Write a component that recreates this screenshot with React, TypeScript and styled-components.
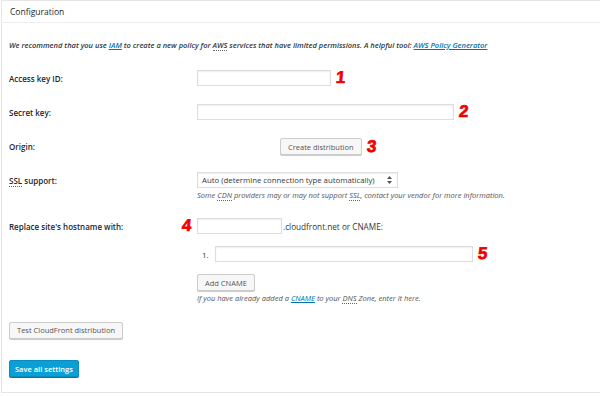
import React from 'react';
import styled, { createGlobalStyle } from 'styled-components';

const GlobalStyle = createGlobalStyle`
  html, body {
    margin: 0;
    padding: 0;
    background: #fff;
    overflow: hidden;
  }
  body {
    font-family: "Open Sans", "Liberation Sans", sans-serif;
    color: #23282d;
  }
`;

const Postbox = styled.div`
  width: 620px;
  height: 393px;
  margin-left: 1px;
  border: 1px solid #e5e5e5;
  background: #fff;
  box-sizing: border-box;
`;

const Header = styled.h2`
  margin: 0;
  height: 21px;
  padding-left: 8px;
  display: flex;
  align-items: center;
  font-size: 8.5px;
  font-weight: 400;
  color: #23282d;
  border-bottom: 1px solid #eee;
`;

const Inside = styled.div`
  padding: 0 7px;
`;

const Intro = styled.p`
  margin: 16px 0 0;
  font-size: 7.5px;
  font-style: italic;
  font-weight: 600;
  line-height: 12px;
  color: #32373c;
`;

const TextLink = styled.a`
  color: #0073aa;
  text-decoration: underline;
`;

const Abbr = styled.abbr`
  text-decoration: none;
  border-bottom: 1px dotted #666;
`;

const Row = styled.div<{ $top?: number }>`
  display: grid;
  grid-template-columns: 188px 1fr;
  align-items: start;
  padding-top: ${p => p.$top ?? 9}px;
`;

const Label = styled.div`
  display: flex;
  align-items: center;
  justify-content: space-between;
  height: 16px;
  font-size: 8px;
  font-weight: 600;
  color: #23282d;
`;

const Field = styled.div`
  display: flex;
  flex-direction: column;
  align-items: flex-start;
`;

const Line = styled.div<{ $indent?: number; $gap?: number }>`
  display: flex;
  align-items: center;
  margin-left: ${p => p.$indent ?? 0}px;
  margin-top: ${p => p.$gap ?? 0}px;
`;

const TextInput = styled.input<{ $w: number }>`
  width: ${p => p.$w}px;
  height: 16px;
  box-sizing: border-box;
  border: 1px solid #ddd;
  box-shadow: inset 0 1px 2px rgba(0, 0, 0, 0.07);
  background: #fff;
  padding: 0 4px;
  margin: 0;
  font-size: 8px;
  outline: none;
`;

const Marker = styled.span`
  font-family: "Liberation Sans", Arial, sans-serif;
  font-weight: 900;
  font-size: 17px;
  line-height: 16px;
  color: #f00000;
  margin-left: 5px;
  transform: skewX(-5deg);
  -webkit-text-stroke: 0.7px #f00000;
`;

const LeadMarker = styled(Marker)`
  margin: 0 6px 0 0;
`;

const Button = styled.button<{ $primary?: boolean }>`
  height: 17px;
  box-sizing: border-box;
  padding: 0 ${p => (p.$primary ? 5 : 7)}px;
  margin: 0;
  font-family: "Open Sans", "Liberation Sans", sans-serif;
  font-size: 7.5px;
  font-weight: ${p => (p.$primary ? 600 : 400)};
  border-radius: 2px;
  cursor: pointer;
  color: ${p => (p.$primary ? '#fff' : '#555')};
  background: ${p => (p.$primary ? '#0aa0d5' : '#f7f7f7')};
  border: 1px solid ${p => (p.$primary ? '#0a8cbf' : '#ccc')};
  box-shadow: 0 1px 0 ${p => (p.$primary ? '#0079a8' : '#ccc')};
`;

const SelectBox = styled.div`
  width: 201px;
  height: 16px;
  box-sizing: border-box;
  border: 1px solid #ddd;
  box-shadow: inset 0 1px 2px rgba(0, 0, 0, 0.07);
  display: flex;
  align-items: center;
  justify-content: space-between;
  padding: 0 5px 0 4px;
  font-size: 7.8px;
  color: #32373c;
`;

const Help = styled.p`
  margin: 2px 0 0;
  font-size: 7.5px;
  font-style: italic;
  line-height: 11px;
  color: #555;
`;

const Suffix = styled.span`
  font-size: 8.2px;
  color: #32373c;
  margin-left: 1px;
`;

const ListNum = styled.span`
  width: 18px;
  padding-left: 5px;
  box-sizing: border-box;
  font-size: 8px;
  color: #32373c;
`;

const Actions = styled.div<{ $top: number }>`
  padding-top: ${p => p.$top}px;
`;

const UpDown = () => (
  <svg width="5" height="8" viewBox="0 0 5 8">
    <path d="M2.5 0 L5 3 H0 Z M2.5 8 L5 5 H0 Z" fill="#555" />
  </svg>
);

export default function App() {
  return (
    <>
      <GlobalStyle />
      <Postbox>
        <Header>Configuration</Header>
        <Inside>
          <Intro>
            We recommend that you use <TextLink href="#">IAM</TextLink> to create a new policy for{' '}
            <Abbr>AWS</Abbr> services that have limited permissions. A helpful tool:{' '}
            <TextLink href="#">AWS Policy Generator</TextLink>
          </Intro>

          <Row $top={19}>
            <Label>Access key ID:</Label>
            <Line>
              <TextInput $w={134} />
              <Marker>1</Marker>
            </Line>
          </Row>

          <Row $top={18}>
            <Label>Secret key:</Label>
            <Line>
              <TextInput $w={257} />
              <Marker>2</Marker>
            </Line>
          </Row>

          <Row $top={18}>
            <Label>Origin:</Label>
            <Line $indent={83}>
              <Button>Create distribution</Button>
              <Marker>3</Marker>
            </Line>
          </Row>

          <Row $top={17}>
            <Label>
              <span>
                <Abbr>SSL</Abbr> support:
              </span>
            </Label>
            <Field>
              <SelectBox>
                <span>Auto (determine connection type automatically)</span>
                <UpDown />
              </SelectBox>
              <Help>
                Some <Abbr>CDN</Abbr> providers may or may not support <Abbr>SSL</Abbr>, contact your
                vendor for more information.
              </Help>
            </Field>
          </Row>

          <Row $top={17}>
            <Label>
              <span>Replace site's hostname with:</span>
              <LeadMarker>4</LeadMarker>
            </Label>
            <Field>
              <Line>
                <TextInput $w={85} />
                <Suffix>.cloudfront.net or CNAME:</Suffix>
              </Line>
              <Line $gap={12}>
                <ListNum>1.</ListNum>
                <TextInput $w={258} />
                <Marker>5</Marker>
              </Line>
              <Line $gap={12}>
                <Button>Add CNAME</Button>
              </Line>
              <Help>
                If you have already added a <TextLink href="#">CNAME</TextLink> to your{' '}
                <Abbr>DNS</Abbr> Zone, enter it here.
              </Help>
            </Field>
          </Row>

          <Actions $top={12}>
            <Button>Test CloudFront distribution</Button>
          </Actions>
          <Actions $top={16}>
            <Button $primary>Save all settings</Button>
          </Actions>
        </Inside>
      </Postbox>
    </>
  );
}
